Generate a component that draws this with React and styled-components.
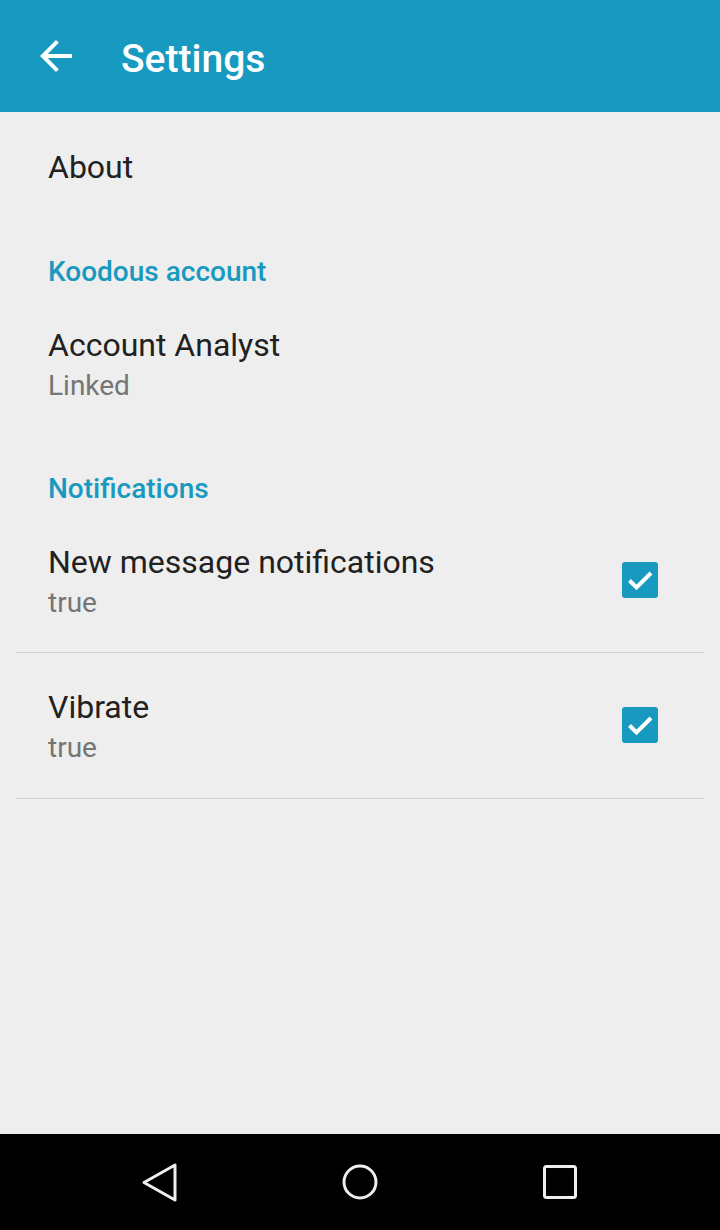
import React from "react";
import styled, { createGlobalStyle } from "styled-components";

const GlobalStyle = createGlobalStyle`
  html, body {
    margin: 0;
    padding: 0;
    background: #eeeeee;
  }
  body {
    font-family: Roboto, "Noto Sans", sans-serif;
  }
`;

function App() {
  return (
    <Screen>
      <GlobalStyle />
      <Toolbar>
        <BackButton>
          <svg width="48" height="48" viewBox="0 0 24 24" fill="#ffffff">
            <path d="M20 11H7.83l5.59-5.59L12 4l-8 8 8 8 1.41-1.41L7.83 13H20v-2z" />
          </svg>
        </BackButton>
        <Title>Settings</Title>
      </Toolbar>

      <List>
        <Item bottom={35}>
          <TextBlock>
            <ItemTitle>About</ItemTitle>
          </TextBlock>
        </Item>

        <Category>Koodous account</Category>
        <Item bottom={32}>
          <TextBlock>
            <ItemTitle>Account Analyst</ItemTitle>
            <Summary>Linked</Summary>
          </TextBlock>
        </Item>

        <Category>Notifications</Category>
        <Item bottom={28} divider>
          <TextBlock>
            <ItemTitle>New message notifications</ItemTitle>
            <Summary>true</Summary>
          </TextBlock>
          <CheckBox />
        </Item>
        <Item top={34} bottom={29} divider>
          <TextBlock>
            <ItemTitle>Vibrate</ItemTitle>
            <Summary>true</Summary>
          </TextBlock>
          <CheckBox />
        </Item>
      </List>

      <NavBar>
        <svg width="40" height="40" viewBox="0 0 40 40">
          <path d="M35 3 L35 38 L4 20.5 Z" fill="none" stroke="#eeeeee" strokeWidth="3" strokeLinejoin="round" />
        </svg>
        <svg width="40" height="40" viewBox="0 0 40 40">
          <circle cx="20" cy="20" r="16" fill="none" stroke="#eeeeee" strokeWidth="3" />
        </svg>
        <svg width="40" height="40" viewBox="0 0 40 40">
          <rect x="4.5" y="4.5" width="31" height="31" rx="2" fill="none" stroke="#eeeeee" strokeWidth="3" />
        </svg>
      </NavBar>
    </Screen>
  );
}

function CheckBox() {
  return (
    <Box>
      <svg width="36" height="36" viewBox="0 0 36 36">
        <path d="M7.5 18.5 L14.5 25.5 L29 11" fill="none" stroke="#ffffff" strokeWidth="4" />
      </svg>
    </Box>
  );
}

export default App;

const Screen = styled.div`
  width: 720px;
  height: 1230px;
  display: flex;
  flex-direction: column;
  background: #eeeeee;
  overflow: hidden;
`;

const Toolbar = styled.div`
  height: 112px;
  flex-shrink: 0;
  display: flex;
  align-items: center;
  background: #1899c0;
  padding-left: 32px;
  box-sizing: border-box;
`;

const BackButton = styled.div`
  width: 48px;
  height: 48px;
  display: flex;
  svg {
    display: block;
  }
`;

const Title = styled.div`
  margin-left: 41px;
  color: #ffffff;
  font-size: 39px;
  font-weight: 500;
  line-height: 48px;
  padding-top: 6px;
`;

const List = styled.div`
  flex: 1;
  display: flex;
  flex-direction: column;
`;

const Item = styled.div`
  margin: 0 16px;
  padding: ${p => p.top || 35}px 46px ${p => p.bottom || 32}px 32px;
  display: flex;
  align-items: center;
  justify-content: space-between;
  border-bottom: ${p => (p.divider ? "1px solid #d4d4d4" : "none")};
`;

const TextBlock = styled.div`
  display: flex;
  flex-direction: column;
`;

const ItemTitle = styled.div`
  font-size: 32px;
  line-height: 40px;
  color: #212121;
`;

const Summary = styled.div`
  font-size: 28px;
  line-height: 42px;
  color: #757575;
`;

const Category = styled.div`
  padding: 32px 0 0 48px;
  font-size: 28px;
  line-height: 36px;
  font-weight: 500;
  color: #1899c0;
`;

const Box = styled.div`
  width: 36px;
  height: 36px;
  border-radius: 3px;
  background: #1899c0;
  margin-bottom: 6px;
  svg {
    display: block;
  }
`;

const NavBar = styled.div`
  height: 96px;
  flex-shrink: 0;
  background: #000000;
  display: flex;
  align-items: center;
  justify-content: space-between;
  padding: 0 140px;
  svg {
    display: block;
  }
`;
